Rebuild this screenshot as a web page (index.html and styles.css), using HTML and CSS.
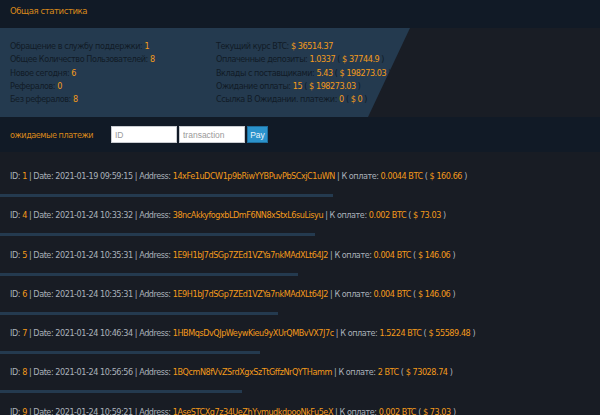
FILE: index.html
```html
<!DOCTYPE html>
<html lang="ru">
<head>
<meta charset="utf-8">
<link rel="stylesheet" href="styles.css">
</head>
<body>
<header class="top">
  <h1 class="title">Общая статистика</h1>
</header>
<section class="stats">
  <div class="panel">
    <ul class="col col-left">
      <li>Обращение в службу поддержки: <b>1</b></li>
      <li>Общее Количество Пользователей: <b>8</b></li>
      <li>Новое сегодня: <b>6</b></li>
      <li>Рефералов: <b>0</b></li>
      <li>Без рефералов: <b>8</b></li>
    </ul>
    <ul class="col col-right">
      <li>Текущий курс BTC: <b>$ 36514.37</b></li>
      <li>Оплаченные депозиты: <b>1.0337</b> ( <b>$ 37744.9</b> )</li>
      <li>Вклады с поставщиками: <b>5.43</b> ( <b>$ 198273.03</b> )</li>
      <li>Ожидание оплаты: <b>15</b> ( <b>$ 198273.03</b> )</li>
      <li>Ссылка В Ожидании. платежи: <b>0</b> ( <b>$ 0</b> )</li>
    </ul>
  </div>
</section>
<section class="search">
  <span class="search-label">ожидаемые платежи</span>
  <input class="field" type="text" placeholder="ID">
  <input class="field" type="text" placeholder="transaction">
  <button class="pay">Pay</button>
</section>
<section class="list">
  <div class="row">
    <p class="line">ID: <b>1</b> | Date: 2021-01-19 09:59:15 | Address: <b>14xFe1uDCW1p9bRiwYYBPuvPbSCxjC1uWN</b> | К оплате: <b>0.0044 BTC</b> ( <b>$ 160.66</b> )</p>
    <div class="bar" style="width:333px"></div>
  </div>
  <div class="row">
    <p class="line">ID: <b>4</b> | Date: 2021-01-24 10:33:32 | Address: <b>38ncAkkyfogxbLDmF6NN8xStxL6suLisyu</b> | К оплате: <b>0.002 BTC</b> ( <b>$ 73.03</b> )</p>
    <div class="bar" style="width:315px"></div>
  </div>
  <div class="row">
    <p class="line">ID: <b>5</b> | Date: 2021-01-24 10:35:31 | Address: <b>1E9H1bJ7dSGp7ZEd1VZYa7nkMAdXLt64J2</b> | К оплате: <b>0.004 BTC</b> ( <b>$ 146.06</b> )</p>
    <div class="bar" style="width:298px"></div>
  </div>
  <div class="row">
    <p class="line">ID: <b>6</b> | Date: 2021-01-24 10:35:31 | Address: <b>1E9H1bJ7dSGp7ZEd1VZYa7nkMAdXLt64J2</b> | К оплате: <b>0.004 BTC</b> ( <b>$ 146.06</b> )</p>
    <div class="bar" style="width:278px"></div>
  </div>
  <div class="row">
    <p class="line">ID: <b>7</b> | Date: 2021-01-24 10:46:34 | Address: <b>1HBMqsDvQJpWeywKieu9yXUrQMBvVX7J7c</b> | К оплате: <b>1.5224 BTC</b> ( <b>$ 55589.48</b> )</p>
    <div class="bar" style="width:260px"></div>
  </div>
  <div class="row">
    <p class="line">ID: <b>8</b> | Date: 2021-01-24 10:56:56 | Address: <b>1BQcmN8fVvZSrdXgxSzTtGffzNrQYTHamm</b> | К оплате: <b>2 BTC</b> ( <b>$ 73028.74</b> )</p>
    <div class="bar" style="width:242px"></div>
  </div>
  <div class="row">
    <p class="line">ID: <b>9</b> | Date: 2021-01-24 10:59:21 | Address: <b>1AseSTCXg7z34UeZhYymudkdpooNkFu5eX</b> | К оплате: <b>0.002 BTC</b> ( <b>$ 73.03</b> )</p>
    <div class="bar" style="width:224px"></div>
  </div>
</section>
</body>
</html>
```

FILE: styles.css
```css
* { box-sizing: border-box; }
html, body { margin: 0; padding: 0; }
body {
  background: #181c24;
  font-family: "DejaVu Sans Condensed", "Liberation Sans", sans-serif;
  font-size: 9px;
  letter-spacing: -0.45px;
  color: #aab1ba;
  overflow: hidden;
  height: 415px;
}
b { font-weight: normal; color: #f39a1b; }

.top {
  background: #111a26;
  height: 28px;
  padding: 4px 10px 0;
}
.title {
  margin: 0;
  font-size: 9.5px;
  font-weight: normal;
  line-height: 14px;
  color: #d9881a;
}

.stats {
  background: #191d25;
  height: 89px;
}
.panel {
  height: 100%;
  background: #243a4f;
  clip-path: polygon(0 0, 410px 0, 368px 100%, 0 100%);
  display: flex;
  padding: 12px 10px 0;
}
.col {
  list-style: none;
  margin: 0;
  padding: 0;
  line-height: 13.3px;
  color: #111b26;
}
.col-left { width: 206px; }

.search {
  background: #111a26;
  height: 35px;
  display: flex;
  align-items: center;
  padding: 0 10px;
}
.search-label {
  color: #d9881a;
  width: 101px;
}
.field {
  width: 66px;
  height: 17px;
  margin: 0 2px 0 0;
  border: 1px solid #c9ccd1;
  background: #fff;
  padding: 0 3px;
  font-family: "Liberation Sans", sans-serif;
  font-size: 8.5px;
  letter-spacing: 0;
  color: #333;
  outline: none;
}
.field::placeholder { color: #9a9a9a; }
.pay {
  height: 17px;
  width: 21px;
  border: 1px solid #1f6f9e;
  background: #2b93cc;
  color: #eaf4fb;
  font-family: "Liberation Sans", sans-serif;
  font-size: 8.5px;
  letter-spacing: 0;
  padding: 0;
}

.list {
  padding-top: 17px;
}
.row {
  height: 39.3px;
}
.line {
  margin: 0;
  padding: 0 10px;
  line-height: 14px;
  white-space: nowrap;
}
.bar {
  height: 3px;
  margin-top: 11px;
  background: #243a4f;
}
```
